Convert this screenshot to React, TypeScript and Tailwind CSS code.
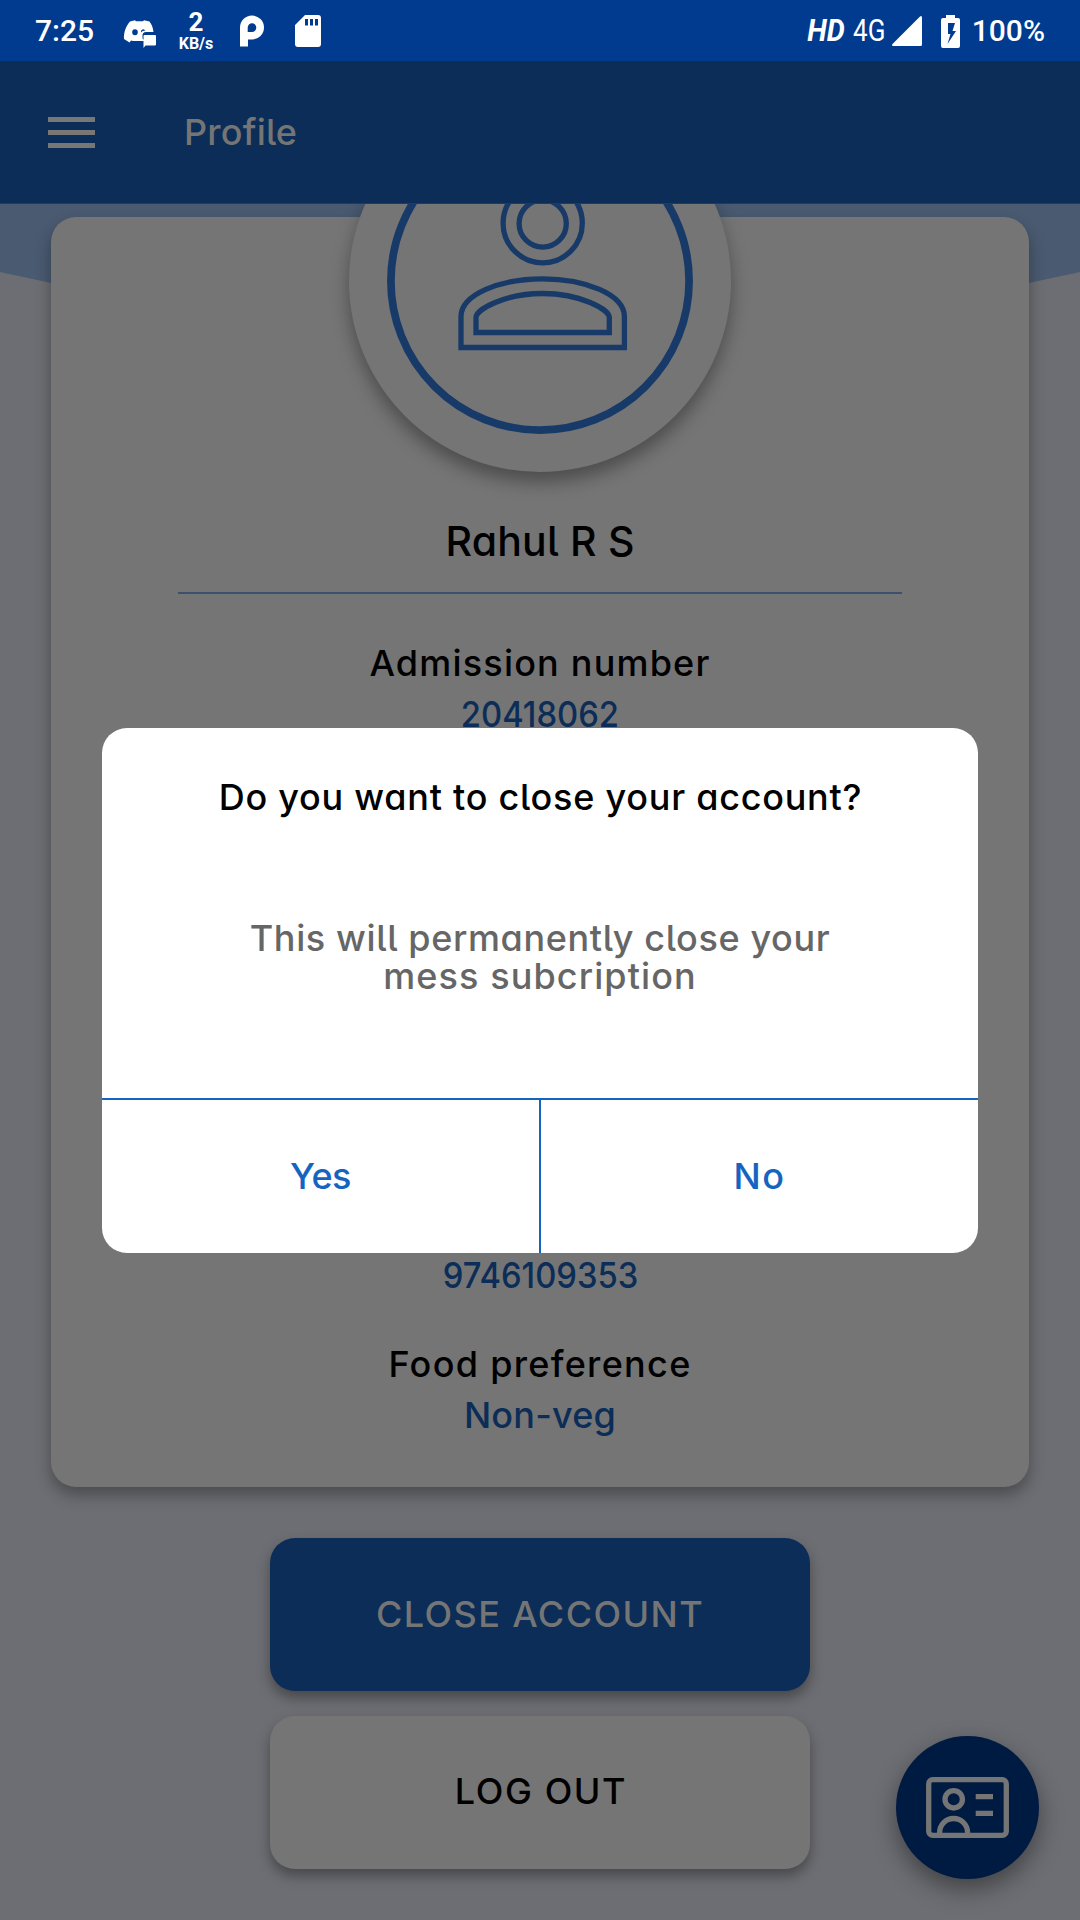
const heading = "font-[Inter,sans-serif] font-[450] [font-feature-settings:'cv11','cv05'] whitespace-nowrap";

function StatusBar() {
  return (
    <div className="flex h-[61px] w-full items-center bg-[#003b8f] font-[Roboto,sans-serif] text-white">
      <span className="ml-[35px] w-[59px] text-[30px] leading-[61px] font-medium whitespace-nowrap">7:25</span>
      <svg className="mt-[6px] ml-[29px] h-[32px] w-[34px]" viewBox="0 0 34 32">
        <path
          fill="#fff"
          fillRule="evenodd"
          d="M7 3.500L12 2.200L13 3.200H20L21 2.200L26.500 3.500C29 7 30 10 30.500 14H23Q19.500 14 19.500 17.500V20.500L22 23H10L8 22.500L6.500 24.500L1 21C.5 14.500 3 8 7 3.500ZM12 11.300A2.800 3 0 1 0 12 17.300A2.800 3 0 1 0 12 11.300ZM20.500 11.300A2.600 2.600 0 0 0 18 14.500Q19 12.800 22.500 12.600Z"
        />
        <path fill="#fff" d="M21.500 17H32Q33 17 33 18V26.500Q33 27.500 32 27.500H22.500L20.500 30V18Q20.500 17 21.500 17Z" />
      </svg>
      <div className="ml-[20px] flex w-[38px] flex-col items-center pt-px font-bold">
        <span className="text-[26px] leading-[25px]">2</span>
        <span className="text-[16px] leading-[17px]">KB/s</span>
      </div>
      <svg className="mt-px ml-[24px] h-[32px] w-[26px]" viewBox="0 0 26 32">
        <path
          fill="#fff"
          fillRule="evenodd"
          d="M1 31.500V12.500A12 12 0 1 1 13 24.500H9V31.500ZM13 8.300A4.300 4.300 0 1 1 13 16.900H8.700V12.600A4.300 4.300 0 0 1 13 8.300Z"
        />
      </svg>
      <svg className="ml-[29px] h-[34px] w-[28px]" viewBox="0 0 28 34">
        <path
          fill="#fff"
          fillRule="evenodd"
          d="M11 1H24Q27 1 27 4V30Q27 33 24 33H4Q1 33 1 30V11ZM11 5V11.500H14V5ZM16 5V11.500H19V5ZM21 5V11.500H24V5Z"
        />
      </svg>
      <span className="ml-auto origin-right scale-x-[0.92] text-[31px] leading-[59px] font-bold italic">HD</span>
      <span className="ml-[8px] w-[34px] origin-left scale-x-[0.84] text-[31px] leading-[61px]">4G</span>
      <svg className="ml-[4px] h-[32px] w-[32px]" viewBox="0 0 32 32">
        <path fill="#fff" d="M29 1.500Q31 0 31 3V29.500Q31 31 29.500 31H3Q0 31 1.500 29Z" />
      </svg>
      <svg className="ml-[17px] h-[34px] w-[21px]" viewBox="0 0 21 34">
        <path
          fill="#fff"
          fillRule="evenodd"
          d="M6 1H15V4H18Q20 4 20 6V32Q20 34 18 34H3Q1 34 1 32V6Q1 4 3 4H6ZM8 9V20H10.500L7.500 30L16 17H12.500L15 9Z"
        />
      </svg>
      <span className="mr-[35px] ml-[11px] text-[30px] leading-[61px] font-medium">100%</span>
    </div>
  );
}

function AppBar() {
  return (
    <header className="relative flex h-[143px] w-full items-center border-b border-[#1d3b63] bg-[#0b2d57]">
      <div className="ml-[48px] flex w-[47px] flex-col gap-[8px] pt-px">
        <div className="h-[5px] bg-[#777]" />
        <div className="h-[5px] bg-[#777]" />
        <div className="h-[5px] bg-[#777]" />
      </div>
      <h1 className={`${heading} ml-[89px] text-[36px] leading-[44px] tracking-[0.2px] text-[#757575]`}>Profile</h1>
    </header>
  );
}

function Avatar() {
  return (
    <div className="mt-[-127px] flex size-[382px] shrink-0 items-center justify-center rounded-full bg-[#757575] shadow-[0_10px_18px_rgba(0,0,0,0.35)]">
      <svg className="size-[306px]" viewBox="387 127.500 306 306" fill="none" stroke="#173a69">
        <circle cx="540" cy="280.500" r="149.100" strokeWidth="7.700" />
        <g strokeWidth="5.300">
          <circle cx="542.700" cy="222.700" r="39.600" />
          <circle cx="542.700" cy="223" r="23.600" />
          <path d="M461 347V316C461 294 500 278.300 542.700 278.300S624.400 294 624.400 316V347Z" />
          <path d="M476 332V317C476 309 505 293 542.700 293S609.300 309 609.300 317V332Z" />
        </g>
      </svg>
    </div>
  );
}

function ProfileCard() {
  return (
    <section className="flex h-[1270px] w-[978px] shrink-0 flex-col items-center rounded-[25px] bg-[#757575] text-black shadow-[0_8px_16px_rgba(0,0,0,0.32)]">
      <Avatar />
      <h2 className={`${heading} mt-[44px] text-[41px] leading-[50px] tracking-[0.2px]`}>Rahul R S</h2>
      <div className="mt-[26px] h-[2px] w-[724px] bg-[#3c516d]" />
      <div className="mt-[44px] flex flex-col items-center">
        <span className={`${heading} text-[36px] leading-[51px] tracking-[1.200px]`}>Admission number</span>
        <span className={`${heading} scale-x-[0.91] text-[36px] leading-[51px] text-[#0b2d57]`}>20418062</span>
      </div>
      <div className="mt-[510px] flex flex-col items-center">
        <span className={`${heading} scale-x-[0.91] text-[36px] leading-[51px] text-[#0b2d57]`}>9746109353</span>
      </div>
      <div className="mt-[38px] flex flex-col items-center">
        <span className={`${heading} text-[36px] leading-[51px] tracking-[1.300px]`}>Food preference</span>
        <span className={`${heading} text-[36px] leading-[51px] tracking-[0.2px] text-[#0b2d57]`}>Non-veg</span>
      </div>
    </section>
  );
}

function Dialog() {
  return (
    <div
      role="dialog"
      className="absolute top-[728px] left-[102px] flex h-[525px] w-[876px] flex-col overflow-hidden rounded-[25px] bg-white"
    >
      <h3 className={`${heading} mt-[46px] pl-px text-center text-[36px] leading-[46px] tracking-[0.75px] text-black`}>
        Do you want to close your account?
      </h3>
      <p className={`${heading} mt-[99px] text-center text-[36px] leading-[38px] text-[#666]`}>
        <span className="tracking-[0.62px]">This will permanently close your</span>
        <br />
        <span className="tracking-[1.100px]">mess subcription</span>
      </p>
      <div className="mt-auto flex h-[155px] border-t-[2px] border-[#1565c0] text-[#1565c0]">
        <button className={`${heading} w-1/2 border-r border-[#1565c0] pb-[2px] text-[36px] tracking-[-0.5px]`}>Yes</button>
        <button className={`${heading} w-1/2 border-l border-[#1565c0] pb-[2px] text-[36px] tracking-[1.500px]`}>No</button>
      </div>
    </div>
  );
}

export default function App() {
  return (
    <div className="relative flex h-[1920px] w-[1080px] flex-col overflow-hidden bg-[#6d6e73]">
      <StatusBar />
      <AppBar />
      <main className="relative flex h-[1716px] flex-col items-center overflow-hidden pt-[13px]">
        <svg className="absolute top-0 left-0 h-[190px] w-[1080px]" viewBox="0 0 1080 190">
          <path fill="#4a5a71" d="M0 0H1080V68L540 184L0 68Z" />
        </svg>
        <div className="relative flex flex-col items-center">
          <ProfileCard />
          <button
            className={`${heading} mt-[51px] h-[153px] w-[540px] rounded-[25px] bg-[#0b2d57] pb-[2px] text-[36px] tracking-[1.400px] text-[#757575] shadow-[0_7px_13px_rgba(0,0,0,0.35)]`}
          >
            CLOSE ACCOUNT
          </button>
          <button
            className={`${heading} mt-[25px] h-[153px] w-[540px] rounded-[25px] bg-[#757575] pb-[3px] pl-[2px] text-[36px] tracking-[1.600px] text-black shadow-[0_7px_13px_rgba(0,0,0,0.35)]`}
          >
            LOG OUT
          </button>
        </div>
      </main>
      <button className="absolute top-[1736px] left-[896px] flex size-[143px] items-center justify-center rounded-full bg-[#001b42] shadow-[0_10px_24px_rgba(0,0,0,0.4)]">
        <svg className="size-[143px]" viewBox="896 1736 143 143" fill="none" stroke="#757575" strokeWidth="5.300">
          <rect x="928.700" y="1779.700" width="77.600" height="55.600" rx="4" />
          <circle cx="953.700" cy="1799.300" r="8.700" />
          <path d="M939.600 1835V1832.500A14 14 0 0 1 967.600 1832.500V1835M975.700 1796.700H993M975.700 1813.300H993" />
        </svg>
      </button>
      <Dialog />
    </div>
  );
}
